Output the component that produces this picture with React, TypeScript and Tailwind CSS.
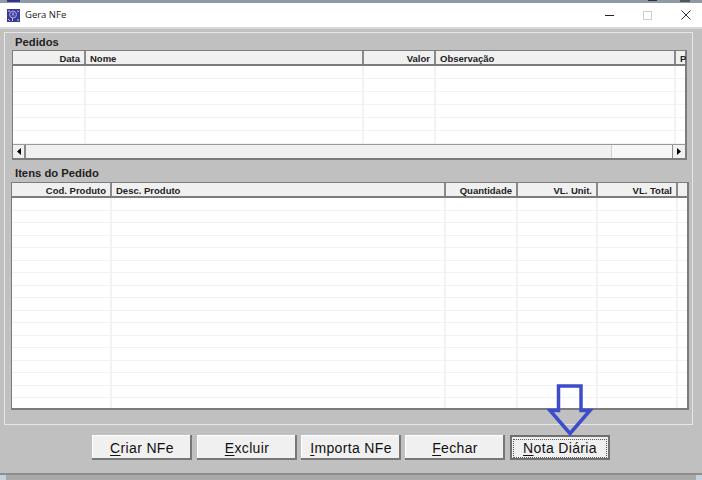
const ordersCols = [
  { label: "Data", w: 73, right: true },
  { label: "Nome", w: 278 },
  { label: "Valor", w: 72, right: true },
  { label: "Observação", w: 240 },
  { label: "P", w: 10 },
];
const itemCols = [
  { label: "Cod. Produto", w: 100, right: true },
  { label: "Desc. Produto", w: 334 },
  { label: "Quantidade", w: 72, right: true },
  { label: "VL. Unit.", w: 80, right: true },
  { label: "VL. Total", w: 80, right: true },
  { label: "", w: 10 },
];

type Col = { label: string; w: number; right?: boolean };

function Grid({ cols, rows, rowClass }: { cols: Col[]; rows: number; rowClass: string }) {
  return (
    <>
      <div className="flex h-[15px] shrink-0 border-b-2 border-[#7c7c7c] bg-[#f0f0f0]">
        {cols.map((c, i) => (
          <div
            key={i}
            style={{ width: c.w }}
            className={`shrink-0 overflow-hidden whitespace-nowrap border-r-2 border-[#8a8a8a] pl-[4px] pr-[4px] pt-[1px] text-[9.5px] leading-[13px] font-bold text-[#222] last:border-r-0 ${c.right ? "text-right" : "text-left"}`}
          >
            {c.label}
          </div>
        ))}
      </div>
      <div className="flex-1 overflow-hidden bg-white">
        {Array.from({ length: rows }).map((_, r) => (
          <div key={r} className={`flex border-b border-[#f2f2f2] ${rowClass}`}>
            {cols.map((c, i) => (
              <div key={i} style={{ width: c.w }} className="shrink-0 border-r-2 border-[#f2f2f2] last:border-r-0" />
            ))}
          </div>
        ))}
      </div>
    </>
  );
}

function Btn({ k, rest, focus, className }: { k: string; rest: string; focus?: boolean; className?: string }) {
  return (
    <button
      className={`flex h-[25px] w-[100px] items-center justify-center bg-[#f0f0f0] pt-[1px] text-[14px] tracking-[0.35px] text-[#111] ${focus ? "shadow-[inset_0_0_0_2px_#6e6e6e]" : "shadow-[inset_-2px_-2px_0_#777,inset_1px_1px_0_#fff]"} ${className ?? ""}`}
    >
      <span className={focus ? "flex h-[19px] w-[94px] items-center justify-center border border-dotted border-[#555]" : ""}>
        <span className="underline underline-offset-2">{k}</span>
        {rest}
      </span>
    </button>
  );
}

export default function App() {
  return (
    <div className="relative flex h-[480px] w-[702px] flex-col overflow-hidden bg-[#c0c0c0] font-['Liberation_Sans',sans-serif]">
      <div className="flex h-[3px] bg-[#8f9aa8]">
        <div className="ml-[7px] h-[2px] w-[13px] bg-[#33308f]" />
        <div className="ml-[628px] h-[1px] w-[9px] bg-[#333]" />
        <div className="ml-[23px] h-[2px] w-[10px] bg-[#555]" />
      </div>
      <div className="flex h-[24px] items-center bg-white pl-[7px] pr-[11px]">
        <svg width="13" height="13" viewBox="0 0 13 13" className="shrink-0">
          <rect width="13" height="13" fill="#3a389c" />
          <circle cx="6" cy="5.500" r="3.500" fill="#4b4aa8" stroke="#a9a8d8" strokeWidth="1" />
          <path d="M6 3.500v3M5.500 9v3M1 2h2M10 11h2M1 10l2 2M10 1.500l2 1.500" stroke="#c9c8ea" strokeWidth="1" />
        </svg>
        <span className="ml-[5px] font-['Open_Sans',sans-serif] text-[9.5px] text-[#222]">Gera NFe</span>
        <div className="ml-auto flex items-center gap-[29px]">
          <div className="h-[1px] w-[9px] bg-[#222]" />
          <div className="h-[9px] w-[9px] border border-[#cfcfcf]" />
          <svg width="10" height="10" viewBox="0 0 10 10">
            <path d="M0.500 0.500l9 9M9.500 0.500l-9 9" stroke="#333" strokeWidth="1" />
          </svg>
        </div>
      </div>
      <div className="h-[2px] bg-[#d8d8d8]" />

      <div className="ml-[4px] mr-[9px] mt-[3px] flex h-[393px] flex-col border border-[#e6e6e6] pl-[7px] pr-[5px]">
        <div className="h-[17px] pl-[3px] pt-[3px] text-[11.25px] leading-[13px] font-bold text-[#222]">Pedidos</div>
        <div className="flex h-[110px] w-[675px] flex-col border border-[#7c7c7c] border-b-2 border-r-2">
          <Grid cols={ordersCols} rows={7} rowClass="h-[13px]" />
          <div className="flex h-[14px] shrink-0 border-t border-[#9a9a9a] bg-[#f7f7f7]">
            <div className="flex w-[13px] items-center justify-center border-r-2 border-[#8a8a8a] bg-[#f0f0f0] text-black">
              <svg width="4" height="7" viewBox="0 0 4 7"><path d="M4 0v7L0 3.500z" /></svg>
            </div>
            <div className="w-[586px] border-r border-[#d0d0d0] bg-[#f0f0f0]" />
            <div className="flex-1" />
            <div className="flex w-[13px] items-center justify-center border-l border-[#8a8a8a] bg-[#f0f0f0] text-black">
              <svg width="4" height="7" viewBox="0 0 4 7"><path d="M0 0v7l4-3.500z" /></svg>
            </div>
          </div>
        </div>
        <div className="h-[22px] pl-[3px] pt-[7px] text-[11.25px] leading-[13px] font-bold text-[#222]">Itens do Pedido</div>
        <div className="-ml-[1px] flex h-[228px] w-[678px] flex-col border border-[#7c7c7c] border-b-2 border-r-2">
          <Grid cols={itemCols} rows={17} rowClass="h-[12.5px]" />
        </div>
      </div>

      <div className="flex flex-1 items-start pl-[92px] pt-[10px]">
        <Btn k="C" rest="riar NFe" />
        <Btn k="E" rest="xcluir" className="ml-[5px]" />
        <Btn k="I" rest="mporta NFe" className="ml-[4px]" />
        <Btn k="F" rest="echar" className="ml-[4px]" />
        <Btn k="N" rest="ota Diária" focus className="ml-[5px]" />
      </div>
      <div className="flex h-[7px] justify-between border-t-2 border-[#8e8e8e] bg-[#a9a9a9]">
        <div className="w-[6px] bg-[#c4d2e0]" />
        <div className="w-[6px] bg-[#c4d2e0]" />
      </div>

      <svg width="50" height="54" viewBox="0 0 50 54" className="absolute left-[546px] top-[383px]">
        <path d="M12.500 3H35V27.500H44L24 50.500L4 27.500H12.500Z" fill="none" stroke="#3c4ccb" strokeWidth="3.500" strokeLinejoin="miter" />
      </svg>
    </div>
  );
}
